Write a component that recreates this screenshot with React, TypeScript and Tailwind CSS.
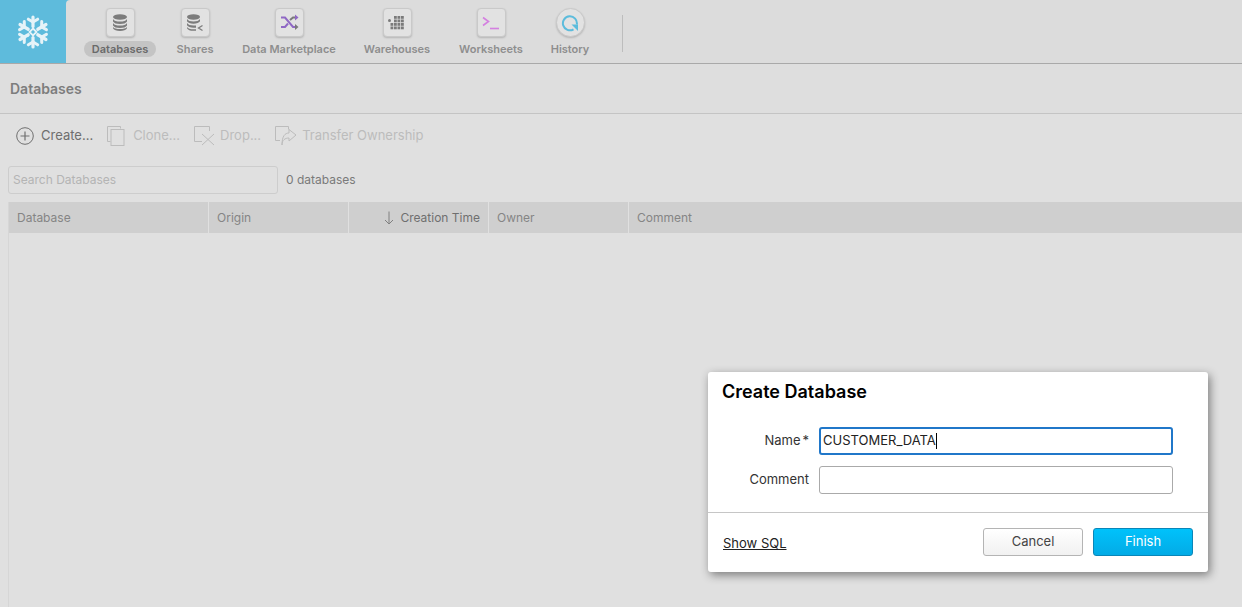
import React from "react";

const font = { fontFamily: "Inter, 'Liberation Sans', sans-serif" };

function Tile({ round, children }: { round?: boolean; children: React.ReactNode }) {
  return (
    <div className={`w-[29px] h-[29px] bg-[#e2e2e2] border border-[#c9c9c9] shadow-[0_1px_2px_rgba(0,0,0,0.18)] flex items-center justify-center ${round ? "rounded-full" : "rounded-[4px]"}`}>
      {children}
    </div>
  );
}

function Db({ small }: { small?: boolean }) {
  return (
    <svg width="16" height="17" viewBox="0 0 16 17" fill="#7c7c7c">
      <ellipse cx="8" cy="3" rx="7" ry="2.8" />
      <path d="M1 5c1 1.800 3.500 2.600 7 2.600S14 6.800 15 5v2.500c-1 1.700-3.500 2.500-7 2.500S2 9.200 1 7.500z" />
      <path d="M1 9c1 1.800 3.500 2.600 7 2.600S14 10.800 15 9v2.500c-1 1.700-3.500 2.500-7 2.500s-6-.8-7-2.500z" />
      <path d="M1 13c1 1.500 3.500 2 7 2s6-.5 7-2v1.200C14 16 11.500 17 8 17s-6-1-7-2.800z" />
      {small ? null : null}
    </svg>
  );
}

function NavItem({ label, center, active, children }: { label: string; center: string; active?: boolean; children: React.ReactNode }) {
  return (
    <div className={`flex flex-col items-center pt-2 ${center}`}>
      <div className="h-[29px] flex items-center justify-center">{children}</div>
      <div className={`mt-1 h-4 px-2 rounded-full flex items-center text-[11px] font-semibold leading-none whitespace-nowrap ${active ? "bg-[#c4c4c4] text-[#6a6a6a]" : "text-[#8e8e8e]"}`}>{label}</div>
    </div>
  );
}

function Snowflake() {
  const arm = (r: number) => (
    <g key={r} transform={`rotate(${r} 18 18)`}>
      <path d="M18 12.500V3" stroke="#e6f3f8" strokeWidth="3.200" strokeLinecap="round" />
      <path d="M18 8 13.300 5.200M18 8l4.700-2.800" stroke="#e6f3f8" strokeWidth="3" strokeLinecap="round" fill="none" />
    </g>
  );
  return (
    <svg width="36" height="36" viewBox="0 0 36 36">
      {[0, 60, 120, 180, 240, 300].map(arm)}
      <path d="M18 14.500 21.500 18 18 21.500 14.500 18z" fill="none" stroke="#e6f3f8" strokeWidth="1.800" />
    </svg>
  );
}

function ToolBtn({ label, disabled, icon, gap }: { label: string; disabled?: boolean; icon: React.ReactNode; gap: string }) {
  return (
    <div className={`flex items-center h-6 text-[13px] whitespace-nowrap ${gap} ${disabled ? "text-[#bcbcbc]" : "text-[#6e6e6e]"}`}>
      {icon}
      <span>{label}</span>
    </div>
  );
}

function Th({ w, children, right }: { w: string; children?: React.ReactNode; right?: boolean }) {
  return (
    <div className={`h-full flex items-center border-r border-[#e0e0e0] text-[12px] shrink-0 ${w} ${right ? "justify-end pr-2 text-[#6f6f6f]" : "pl-2 text-[#858585]"}`}>
      {children}
    </div>
  );
}

export default function App() {
  return (
    <div style={font} className="relative w-[1242px] h-[607px] overflow-hidden bg-[#e0e0e0]">
      {/* Top navigation */}
      <header className="flex h-[64px] bg-[#5ebbdc] border-b border-[#a9a9a9]">
        <div className="w-[66px] flex items-center justify-center pl-0"><Snowflake /></div>
        <div className="flex-1 flex bg-[#dcdcdc] rounded-tl-[4px] relative">
          <NavItem label="Databases" center="w-[92px] ml-[8px]" active>
            <Tile><Db /></Tile>
          </NavItem>
          <NavItem label="Shares" center="w-[58px]">
            <Tile>
              <svg width="18" height="18" viewBox="0 0 18 18" fill="#7c7c7c">
                <ellipse cx="7.500" cy="3" rx="6.500" ry="2.700" />
                <path d="M1 5c1 1.700 3.300 2.500 6.500 2.500S13 6.700 14 5v2.300C13 9 10.700 9.700 7.500 9.700S2 9 1 7.300z" />
                <path d="M1 9c1 1.700 3.300 2.500 6.500 2.500H10v2.200H7.500C4.300 13.700 2 13 1 11.300z" />
                <path d="M1 13c1 1.500 3.300 2.300 6.500 2.300H10v1.500H7.500C4 16.800 1.800 15.800 1 14.200z" />
                <path d="M16.500 11.500 12.500 14l4 2.500" fill="none" stroke="#7c7c7c" strokeWidth="1.300" />
              </svg>
            </Tile>
          </NavItem>
          <NavItem label="Data Marketplace" center="w-[130px]">
            <Tile>
              <svg width="19" height="17" viewBox="0 0 19 17" fill="none">
                <path d="M1 3.500h4l8 9.500h2.500" stroke="#8f68c4" strokeWidth="2" />
                <path d="M1 13h4l3-3.500" stroke="#8f68c4" strokeWidth="2" />
                <path d="M10 6l3-2.500h2.500" stroke="#7a7a7a" strokeWidth="2" />
                <path d="M15 0.500 18.500 3.500 15 6.500z" fill="#8f68c4" />
                <path d="M15 10 18.500 13 15 16z" fill="#7a7a7a" />
              </svg>
            </Tile>
          </NavItem>
          <NavItem label="Warehouses" center="w-[86px]">
            <Tile>
              <svg width="18" height="16" viewBox="0 0 18 16" fill="#7a7a7a">
                {[
                  [6, 1], [9.500, 1], [13, 1],
                  [6, 4.500], [9.500, 4.500], [13, 4.500],
                  [2.500, 8], [6, 8], [9.500, 8], [13, 8],
                  [2.500, 11.500], [6, 11.500], [9.500, 11.500], [13, 11.500],
                ].map(([x, y]) => <rect key={`${x}-${y}`} x={x} y={y} width="2.800" height="2.800" />)}
                <circle cx="1.500" cy="5.500" r="1.500" />
              </svg>
            </Tile>
          </NavItem>
          <NavItem label="Worksheets" center="w-[102px]">
            <Tile>
              <svg width="18" height="16" viewBox="0 0 18 16" fill="none" stroke="#d480e0" strokeWidth="1.600">
                <path d="M1 2.500 6.500 6.500 1 10.500" />
                <path d="M8 13.500h9" />
              </svg>
            </Tile>
          </NavItem>
          <NavItem label="History" center="w-[56px]">
            <Tile round>
              <svg width="18" height="18" viewBox="0 0 18 18" fill="none">
                <path d="M12.500 15.300A7 7 0 1 1 15.800 10.500" stroke="#5cbcdc" strokeWidth="2" />
                <path d="M10.500 10.500h6.500v6.500z" fill="#5cbcdc" />
              </svg>
            </Tile>
          </NavItem>
          <div className="ml-[24px] mt-[15px] h-[37px] w-px bg-[#bdbdbd]" />
        </div>
      </header>

      {/* Page title */}
      <div className="h-[50px] bg-[#dedede] border-b border-[#c4c4c4] pl-[10px] flex items-center text-[14px] font-semibold text-[#7d7d7d]">
        Databases
      </div>

      {/* Toolbar */}
      <div className="h-[52px] pl-[16px] pt-[10px] flex items-start">
        <ToolBtn label="Create..." gap="gap-[7px] mr-[14px]" icon={
          <svg width="18" height="18" viewBox="0 0 18 18" fill="none" stroke="#707070" strokeWidth="1">
            <circle cx="9" cy="9" r="8.300" />
            <path d="M9 4.500v9M4.500 9h9" strokeWidth="1.200" />
          </svg>
        } />
        <ToolBtn label="Clone..." disabled gap="gap-[8px] mr-[14px]" icon={
          <svg width="18" height="20" viewBox="0 0 18 20" fill="none" stroke="#bcbcbc" strokeWidth="1">
            <path d="M13.500 2.500V.5H.5v15h3" />
            <rect x="4" y="3.500" width="13" height="16" />
          </svg>
        } />
        <ToolBtn label="Drop..." disabled gap="gap-[5px] mr-[14px]" icon={
          <svg width="21" height="20" viewBox="0 0 21 20" fill="none" stroke="#bcbcbc" strokeWidth="1">
            <path d="M15.500 5V.5H.5v15H8" />
            <path d="M8 8l12 11M20 8 8 19" />
          </svg>
        } />
        <ToolBtn label="Transfer Ownership" disabled gap="gap-[5px]" icon={
          <svg width="22" height="20" viewBox="0 0 22 20" fill="none" stroke="#bcbcbc" strokeWidth="1">
            <path d="M13.500 3.500V.5H.5v14H5" />
            <path d="M7 19c0-5 3-7 7-7V15l7-6-7-5.500V7c-4 0-7 3-7 12z" />
          </svg>
        } />
      </div>

      {/* Search */}
      <div className="pl-[8px] flex items-center gap-[8px]">
        <div className="w-[270px] h-[28px] rounded-[3px] border border-[#cdcdcd] bg-[#e0e0e0] flex items-center pl-[4px] text-[12px] text-[#b4b4b4]">
          Search Databases
        </div>
        <span className="text-[12px] text-[#7a7a7a]">0 databases</span>
      </div>

      {/* Table */}
      <div className="ml-[8px] mt-[8px] h-[405px] border-l border-[#d6d6d6]">
        <div className="h-[31px] bg-[#cfcfcf] flex items-center">
          <Th w="w-[200px]">Database</Th>
          <Th w="w-[140px]">Origin</Th>
          <Th w="w-[140px]" right>
            <svg width="12" height="14" viewBox="0 0 12 14" fill="none" stroke="#808080" className="mr-[5px]">
              <path d="M6 .5v12.500M2 9l4 4 4-4" />
            </svg>
            Creation Time
          </Th>
          <Th w="w-[140px]">Owner</Th>
          <div className="pl-2 text-[12px] text-[#858585]">Comment</div>
        </div>
      </div>

      {/* Modal dialog */}
      <div className="absolute left-[708px] top-[372px] w-[500px] h-[200px] bg-white rounded-[3px] shadow-[2px_3px_10px_rgba(0,0,0,0.45)] flex flex-col">
        <div className="h-[42px] pl-[14px] pt-[8px] text-[18px] font-semibold text-black leading-[24px]">Create Database</div>
        <div className="flex-1 pt-[13px] pl-[111px] flex flex-col gap-[11px]">
          <div className="flex items-center">
            <label className="w-[101px] -ml-[101px] pr-[10px] text-right text-[13px] text-[#333] whitespace-nowrap">Name<span className="ml-[2px]">*</span></label>
            <div className="w-[354px] h-[28px] rounded-[3px] border-2 border-[#2077c9] flex items-center pl-[2px] text-[13px] text-[#222]">
              CUSTOMER_DATA<span className="inline-block w-px h-[16px] bg-black" />
            </div>
          </div>
          <div className="flex items-center">
            <label className="w-[101px] -ml-[101px] pr-[10px] text-right text-[13px] text-[#333]">Comment</label>
            <div className="w-[354px] h-[28px] rounded-[3px] border border-[#aaaaaa]" />
          </div>
        </div>
        <div className="h-[60px] border-t border-[#c6c6c6] pl-[15px] pr-[15px] pt-[15px] flex items-start justify-between">
          <span className="mt-[6px] text-[13px] text-[#222] underline">Show SQL</span>
          <div className="flex gap-[10px]">
            <div className="w-[100px] h-[28px] rounded-[3px] border border-[#b4b4b4] bg-gradient-to-b from-white to-[#f1f1f1] flex items-center justify-center text-[13px] text-[#444]">Cancel</div>
            <div className="w-[100px] h-[28px] rounded-[3px] border border-[#0a86b8] bg-gradient-to-b from-[#00c2fb] to-[#03abe6] flex items-center justify-center text-[13px] text-white">Finish</div>
          </div>
        </div>
      </div>
    </div>
  );
}
